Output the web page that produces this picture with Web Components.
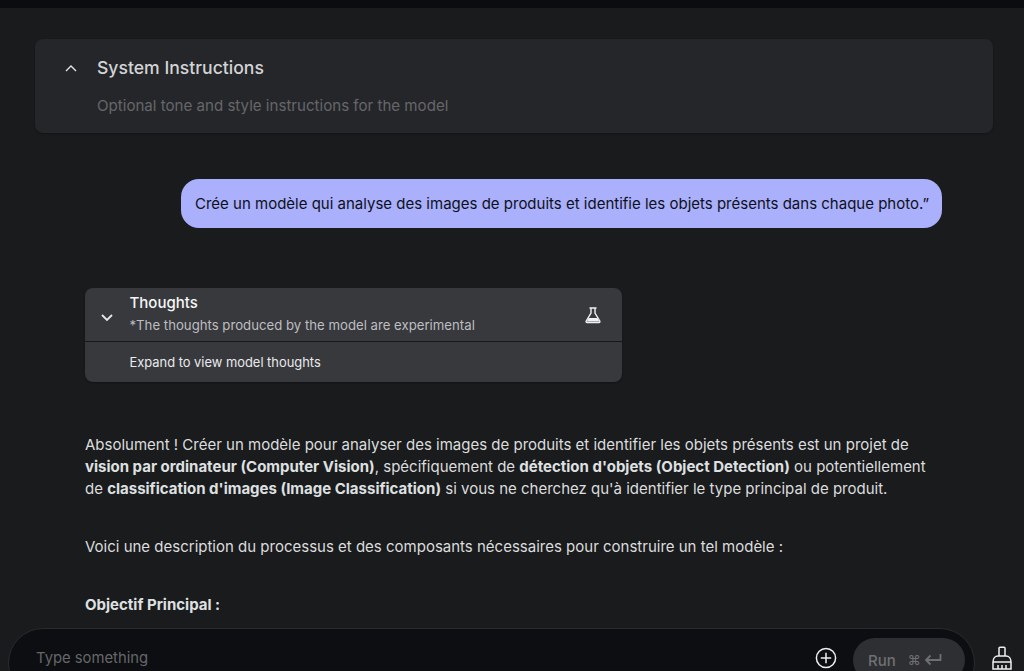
<!DOCTYPE html>
<html lang="fr">
<head>
<meta charset="utf-8">
<title>Chat</title>
<style>
  html, body { margin: 0; height: 100%; background: #1a1b1d; overflow: hidden; }
  body { font-family: Inter, "Liberation Sans", sans-serif; }
</style>
</head>
<body>
<chat-app>
  <system-panel></system-panel>
  <user-bubble>Crée un modèle qui analyse des images de produits et identifie les objets présents dans chaque photo.”</user-bubble>
  <thoughts-card></thoughts-card>
  <model-reply></model-reply>
</chat-app>

<script>
class ChatApp extends HTMLElement {
  constructor() {
    super();
    this.attachShadow({ mode: "open" });
    this.shadowRoot.innerHTML = /*html*/ `
      <style>
        :host {
          display: flex;
          flex-direction: column;
          height: 671px;
          width: 1024px;
          overflow: hidden;
          background: #1a1b1d;
        }
        .top { flex: 0 0 8px; background: #0b0c10; }
        main {
          flex: 1;
          min-height: 0;
          overflow: hidden;
          padding: 31px 31px 0 35px;
        }
      </style>
      <div class="top"></div>
      <main><slot></slot></main>
      <chat-composer></chat-composer>
    `;
  }
}

class SystemPanel extends HTMLElement {
  constructor() {
    super();
    this.attachShadow({ mode: "open" });
    this.shadowRoot.innerHTML = /*html*/ `
      <style>
        :host {
          display: grid;
          grid-template-columns: 62px 1fr;
          height: 94px;
          box-sizing: border-box;
          padding-top: 18px;
          background: #252629;
          border-radius: 8px;
          box-shadow: 0 1px 2px rgba(0,0,0,.3);
        }
        .ic { display: flex; justify-content: center; padding-left: 9px; box-sizing: border-box; height: 22px; align-items: center; }
        h2 { margin: 0; font-size: 17.6px; line-height: 22px; font-weight: 500; color: #d3d4d6; }
        p { margin: 17px 0 0; font-size: 15.1px; line-height: 20px; color: #66676a; }
      </style>
      <div class="ic">
        <svg width="14" height="9" viewBox="0 0 14 9" fill="none" stroke="#e4e5e7" stroke-width="1.4"><path d="M2 7l5-5 5 5"/></svg>
      </div>
      <div>
        <h2>System Instructions</h2>
        <p>Optional tone and style instructions for the model</p>
      </div>
    `;
  }
}

class UserBubble extends HTMLElement {
  constructor() {
    super();
    this.attachShadow({ mode: "open" });
    this.shadowRoot.innerHTML = /*html*/ `
      <style>
        :host {
          display: flex;
          justify-content: flex-end;
          margin: 46px 51px 0 0;
        }
        div {
          width: 761px;
          height: 49px;
          box-sizing: border-box;
          padding-left: 14px;
          display: flex;
          align-items: center;
          background: #aab0fb;
          color: #0e1020;
          border-radius: 18px;
          font-size: 15px;
          white-space: nowrap;
        }
      </style>
      <div><slot></slot></div>
    `;
  }
}

class ThoughtsCard extends HTMLElement {
  constructor() {
    super();
    this.attachShadow({ mode: "open" });
    this.shadowRoot.innerHTML = /*html*/ `
      <style>
        :host {
          display: block;
          width: 537px;
          height: 94px;
          margin: 60px 0 0 50px;
          background: #38393d;
          border-radius: 8px;
          color: #f2f3f4;
          box-shadow: 0 1px 2px rgba(0,0,0,.35);
          overflow: hidden;
        }
        header {
          display: grid;
          grid-template-columns: 44.5px 1fr 58px;
          align-items: center;
          height: 54px;
          box-sizing: border-box;
          border-bottom: 1px solid #17181a;
        }
        .chev, .flask { display: flex; justify-content: center; }
        .chev { padding-top: 6px; }
        .titles { padding-bottom: 2px; }
        h3 { margin: 0; font-size: 15px; line-height: 20px; font-weight: 500; color: #f5f6f7; }
        small { display: block; margin-top: 3px; font-size: 13.2px; line-height: 18px; color: #bdbec1; }
        .body { padding: 12px 0 0 44.5px; font-size: 12.9px; line-height: 18px; color: #e9eaec; }
      </style>
      <header>
        <div class="chev">
          <svg width="14" height="9" viewBox="0 0 14 9" fill="none" stroke="#e6e7e9" stroke-width="1.8"><path d="M2 2l5 5 5-5"/></svg>
        </div>
        <div class="titles">
          <h3>Thoughts</h3>
          <small>*The thoughts produced by the model are experimental</small>
        </div>
        <div class="flask">
          <svg width="18" height="18" viewBox="0 0 18 18" fill="none" stroke="#f0f1f2" stroke-width="1.4"><path d="M5.5 2h7M7 2v5L2.2 15a1 1 0 0 0 .9 1.5h11.8a1 1 0 0 0 .9-1.5L11 7V2"/><path d="M4.6 12h8.8l2 3.6H2.8z" fill="#f0f1f2" stroke="none"/></svg>
        </div>
      </header>
      <div class="body">Expand to view model thoughts</div>
    `;
  }
}

class ModelReply extends HTMLElement {
  constructor() {
    super();
    this.attachShadow({ mode: "open" });
    this.shadowRoot.innerHTML = /*html*/ `
      <style>
        :host {
          display: block;
          margin: 52px 0 0 50px;
          width: 850px;
          font-size: 15px;
          line-height: 22px;
          color: #dcddde;
        }
        p { margin: 0 0 36px; }
        b { font-weight: 700; color: #dfe0e1; }
      </style>
      <p>Absolument ! Créer un modèle pour analyser des images de produits et identifier les objets présents est un projet de <b>vision par ordinateur (Computer Vision)</b>, spécifiquement de <b>détection d'objets (Object Detection)</b> ou potentiellement de <b>classification d'images (Image Classification)</b> si vous ne cherchez qu'à identifier le type principal de produit.</p>
      <p>Voici une description du processus et des composants nécessaires pour construire un tel modèle :</p>
      <p><b>Objectif Principal :</b></p>
    `;
  }
}

class ChatComposer extends HTMLElement {
  constructor() {
    super();
    this.attachShadow({ mode: "open" });
    this.shadowRoot.innerHTML = /*html*/ `
      <style>
        :host {
          flex: 0 0 43px;
          display: flex;
          padding-left: 8px;
          overflow: hidden;
        }
        .box {
          width: 967px;
          height: 70px;
          box-sizing: border-box;
          border: 1px solid #2a2b2e;
          border-radius: 35px;
          background: #0d0e11;
          display: flex;
          align-items: flex-start;
          padding: 9px 9px 0 27px;
        }
        .ph { flex: 1; font-size: 14.8px; line-height: 40px; color: #66676a; }
        .plus { display: flex; margin: 9px 16px 0 0; }
        .run {
          width: 112px;
          height: 44px;
          border-radius: 22px;
          background: #2e2f32;
          display: flex;
          align-items: center;
          padding-left: 15px;
          box-sizing: border-box;
          font-size: 15px;
          font-weight: 500;
          color: #6e6f72;
          gap: 12px;
        }
        .keys { display: flex; align-items: center; gap: 3px; font-size: 13px; }
        .broom { display: flex; padding: 18px 0 0 17px; }
      </style>
      <div class="box">
        <div class="ph">Type something</div>
        <div class="plus">
          <svg width="22" height="22" viewBox="0 0 22 22" fill="none" stroke="#eeeff0" stroke-width="1.5"><circle cx="11" cy="11" r="9.6"/><path d="M11 5.800v10.400M5.800 11h10.400"/></svg>
        </div>
        <div class="run">
          <span>Run</span>
          <span class="keys">⌘
            <svg width="18" height="14" viewBox="0 0 18 14" fill="none" stroke="#6e6f72" stroke-width="1.8"><path d="M16.5 1v6H2M6.5 2.500L2 7l4.500 4.500"/></svg>
          </span>
        </div>
      </div>
      <div class="broom">
        <svg width="20" height="24" viewBox="0 0 20 24" fill="none" stroke="#eeeff0" stroke-width="1.5"><path d="M7 10V2.200a1 1 0 0 1 1-1h4a1 1 0 0 1 1 1V10"/><path d="M1 16c0-3.500 2-6 5-6h8c3 0 5 2.500 5 6v7H1zM1 16h18M6 23v-4M10 23v-4M14 23v-4"/></svg>
      </div>
    `;
  }
}

customElements.define("chat-app", ChatApp);
customElements.define("system-panel", SystemPanel);
customElements.define("user-bubble", UserBubble);
customElements.define("thoughts-card", ThoughtsCard);
customElements.define("model-reply", ModelReply);
customElements.define("chat-composer", ChatComposer);
</script>
</body>
</html>
